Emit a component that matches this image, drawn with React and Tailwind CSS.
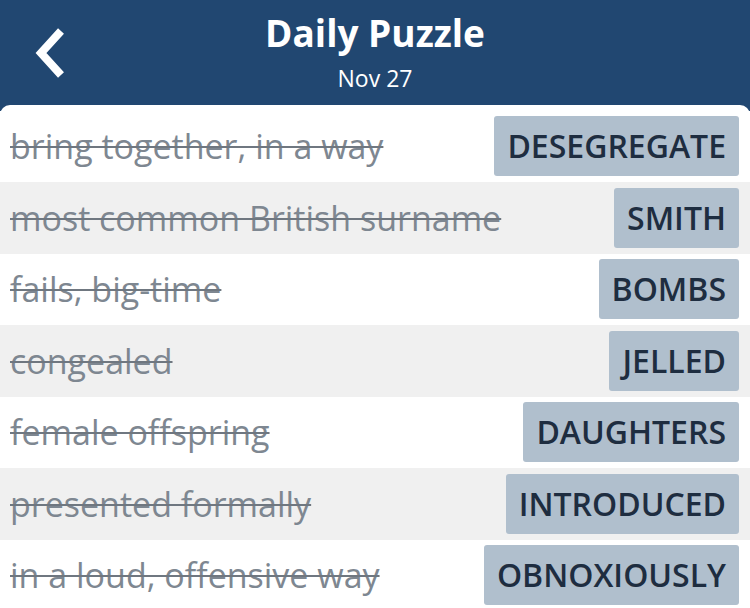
import React from 'react';

const clues = [
  { clue: 'bring together, in a way', answer: 'DESEGREGATE' },
  { clue: 'most common British surname', answer: 'SMITH' },
  { clue: 'fails, big-time', answer: 'BOMBS' },
  { clue: 'congealed', answer: 'JELLED' },
  { clue: 'female offspring', answer: 'DAUGHTERS' },
  { clue: 'presented formally', answer: 'INTRODUCED' },
  { clue: 'in a loud, offensive way', answer: 'OBNOXIOUSLY' },
];

const BackIcon = () => (
  <svg width="40" height="56" viewBox="0 0 40 56" fill="none">
    <path d="M30 6 L10 28 L30 50" stroke="white" strokeWidth="8" strokeLinejoin="miter" />
  </svg>
);

const App = () => {
  return (
    <div className="w-[750px] h-[608px] overflow-hidden bg-[#214771] font-['Open_Sans',sans-serif]">
      <header className="relative h-[105px] flex flex-col items-center text-white">
        <button className="absolute left-[31px] top-[25px]">
          <BackIcon />
        </button>
        <h1 className="mt-[9px] text-[37px] leading-[48px] font-bold">Daily Puzzle</h1>
        <div className="mt-[7px] text-[23px] leading-[28px]">Nov 27</div>
      </header>
      <div className="bg-white rounded-t-[10px] pt-[5.5px]">
        {clues.map((c, i) => (
          <div
            key={c.answer}
            className={`h-[71.5px] flex items-center justify-between pl-[10px] pr-[11px] ${i % 2 === 1 ? 'bg-[#f0f0f0]' : 'bg-white'}`}
          >
            <span className="text-[34px] leading-[40px] text-[#7e8791] line-through decoration-[#6f7780] decoration-2">
              {c.clue}
            </span>
            <span className="h-[60px] flex items-center px-[13px] rounded-[3px] bg-[#b0bfcd] text-[#1e2d40] text-[32px] font-semibold">
              {c.answer}
            </span>
          </div>
        ))}
      </div>
    </div>
  );
};

export default App;
